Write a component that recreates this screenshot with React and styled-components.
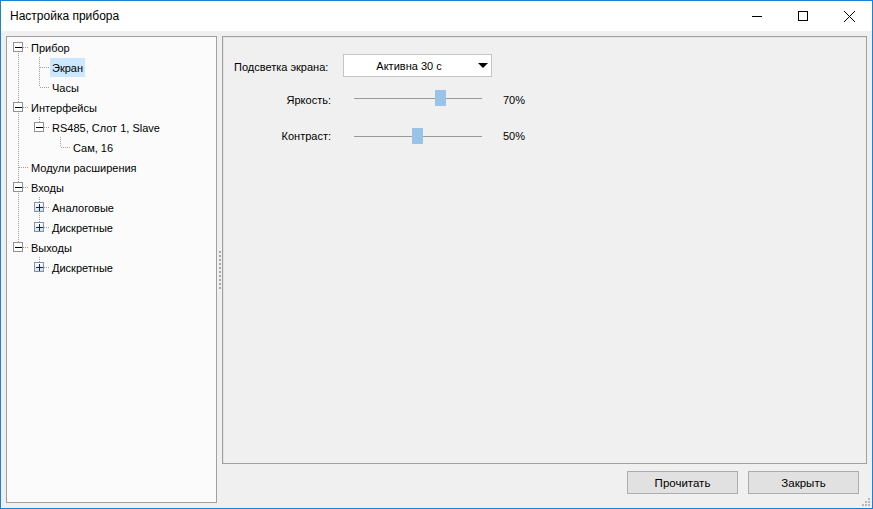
import React from "react";
import styled, { createGlobalStyle } from "styled-components";

const Global = createGlobalStyle`
  html, body { margin: 0; padding: 0; background: #fff; }
  body { font-family: "Liberation Sans", Arial, sans-serif; }
  * { box-sizing: border-box; }
`;

const Window = styled.div`
  position: relative;
  width: 873px;
  height: 509px;
  border: 1px solid #1883d7;
  background: #f0f0f0;
  display: flex;
  flex-direction: column;
  font-family: "Liberation Sans", Arial, sans-serif;
  font-size: 11px;
  color: #000;
`;

const TitleBar = styled.div`
  height: 30px;
  background: #fff;
  display: flex;
  align-items: center;
`;

const Title = styled.div`
  flex: 1;
  padding-left: 9px;
  font-size: 12px;
  color: #000;
`;

const CaptionButton = styled.div`
  width: 46px;
  height: 30px;
  display: flex;
  align-items: center;
  justify-content: center;
`;

const Body = styled.div`
  flex: 1;
  display: flex;
  padding: 5px;
  min-height: 0;
`;

const TreePanel = styled.div`
  width: 211px;
  border: 1px solid #a0a0a0;
  background: #fbfbfb;
  display: flex;
  flex-direction: column;
`;

const TreeRow = styled.div`
  height: 20px;
  display: flex;
  align-items: center;
  white-space: nowrap;
`;

const TreeLabel = styled.span`
  margin-left: 1px;
  padding: 0 2px;
  height: 19px;
  line-height: 20px;
  background: ${(p) => (p.$selected ? "#cce8ff" : "transparent")};
`;

const Splitter = styled.div`
  width: 5px;
  display: flex;
  flex-direction: column;
  align-items: center;
  justify-content: center;
  gap: 2px;
  padding-top: 1px;
`;

const SplitterDot = styled.div`
  width: 2px;
  height: 2px;
  background: #a7a7a7;
`;

const RightColumn = styled.div`
  flex: 1;
  display: flex;
  flex-direction: column;
`;

const SettingsPanel = styled.div`
  height: 428px;
  border: 1px solid #a0a0a0;
  box-shadow: inset 1px 1px 0 #e3e3e3;
  padding: 17px 0 0 11px;
  display: flex;
  flex-direction: column;
`;

const FormRow = styled.div`
  display: flex;
  align-items: center;
  height: ${(p) => p.$h}px;
  margin-top: ${(p) => p.$mt || 0}px;
`;

const FieldLabel = styled.div`
  width: 97px;
  margin-right: 12px;
  text-align: ${(p) => (p.$right ? "right" : "left")};
  transform: translateY(${(p) => p.$dy || 0}px);
  white-space: nowrap;
`;

const Combo = styled.div`
  position: relative;
  width: 149px;
  height: 23px;
  background: #fff;
  border: 1px solid #c5c5c5;
  display: flex;
  align-items: center;
  padding-right: 17px;
`;

const ComboText = styled.div`
  flex: 1;
  text-align: center;
`;

const ComboArrow = styled.svg`
  position: absolute;
  right: 3px;
  top: 8px;
`;

const Slider = styled.div`
  position: relative;
  width: 149px;
  height: 24px;
  display: flex;
  align-items: center;
  padding: 0 10px 0 11px;
`;

const Track = styled.div`
  flex: 1;
  height: 1px;
  background: #9a9a9a;
`;

const Thumb = styled.div`
  position: absolute;
  top: 4px;
  width: 11px;
  height: 16px;
  background: #9bc2e7;
`;

const ValueText = styled.div`
  margin-left: 11px;
  transform: translateY(${(p) => p.$dy || 0}px);
`;

const ButtonBar = styled.div`
  flex: 1;
  display: flex;
  justify-content: flex-end;
  align-items: flex-start;
  gap: 10px;
  padding: 7px 8px 0 0;
`;

const Button = styled.div`
  width: 111px;
  height: 23px;
  border: 1px solid #adadad;
  background: #e1e1e1;
  display: flex;
  align-items: center;
  justify-content: center;
  font-size: 11.5px;
`;

const Grip = styled.svg`
  position: absolute;
  right: 1px;
  bottom: 1px;
`;

const tree = [
  {
    label: "Прибор",
    open: true,
    children: [{ label: "Экран", selected: true }, { label: "Часы" }],
  },
  {
    label: "Интерфейсы",
    open: true,
    children: [
      {
        label: "RS485, Слот 1, Slave",
        open: true,
        children: [{ label: "Сам, 16" }],
      },
    ],
  },
  { label: "Модули расширения" },
  {
    label: "Входы",
    open: true,
    children: [
      { label: "Аналоговые", collapsed: true },
      { label: "Дискретные", collapsed: true },
    ],
  },
  {
    label: "Выходы",
    open: true,
    children: [{ label: "Дискретные", collapsed: true }],
  },
];

function flatten(nodes, depth, guides, out) {
  nodes.forEach((n, i) => {
    const hasNext = i < nodes.length - 1;
    const first = depth === 0 && i === 0;
    out.push({
      label: n.label,
      selected: n.selected,
      depth,
      guides,
      hasNext,
      first,
      box: n.collapsed ? "plus" : n.children ? "minus" : null,
    });
    if (n.children && n.open) flatten(n.children, depth + 1, [...guides, hasNext], out);
  });
  return out;
}

const rows = flatten(tree, 0, [], []);

const LINE = "#a0a0a0";

function GuideCell({ full }) {
  return (
    <svg width="21" height="20" style={{ display: "block", flex: "none" }}>
      {full && (
        <line x1="11.5" y1="0" x2="11.5" y2="20" stroke={LINE} strokeDasharray="1 1" />
      )}
    </svg>
  );
}

function NodeCell({ hasNext, first, box }) {
  const top = first ? 10 : 0;
  const bottom = hasNext ? 20 : 10;
  return (
    <svg width="21" height="20" style={{ display: "block", flex: "none" }}>
      <line x1="11.5" y1={top} x2="11.5" y2={bottom} stroke={LINE} strokeDasharray="1 1" />
      <line x1="12" y1="10.5" x2="22" y2="10.5" stroke={LINE} strokeDasharray="1 1" />
      {box === "minus" && (
        <g>
          <rect x="6.5" y="5.5" width="9" height="9" fill="#fff" stroke="#919191" />
          <line x1="8" y1="10.5" x2="15" y2="10.5" stroke="#000" />
        </g>
      )}
      {box === "plus" && (
        <g>
          <defs>
            <linearGradient id="pg" x1="0" y1="0" x2="0" y2="1">
              <stop offset="0" stopColor="#ffffff" />
              <stop offset="1" stopColor="#d3dce6" />
            </linearGradient>
          </defs>
          <rect x="6.5" y="5.5" width="9" height="9" fill="url(#pg)" stroke="#8094ab" />
          <line x1="8" y1="10.5" x2="15" y2="10.5" stroke="#1a2a3a" />
          <line x1="11.5" y1="7" x2="11.5" y2="14" stroke="#1a2a3a" />
        </g>
      )}
    </svg>
  );
}

function SliderControl({ value }) {
  const left = 16 + (value / 100) * 117 - 5.5;
  return (
    <Slider>
      <Track />
      <Thumb style={{ left: `${left}px` }} />
    </Slider>
  );
}

export default function App() {
  return (
    <>
      <Global />
      <Window>
        <TitleBar>
          <Title>Настройка прибора</Title>
          <CaptionButton>
            <svg width="10" height="10">
              <line x1="0" y1="5.5" x2="10" y2="5.5" stroke="#000" />
            </svg>
          </CaptionButton>
          <CaptionButton>
            <svg width="10" height="10">
              <rect x="0.5" y="0.5" width="9" height="9" fill="none" stroke="#000" />
            </svg>
          </CaptionButton>
          <CaptionButton>
            <svg width="11" height="11">
              <line x1="0" y1="0" x2="11" y2="11" stroke="#000" />
              <line x1="11" y1="0" x2="0" y2="11" stroke="#000" />
            </svg>
          </CaptionButton>
        </TitleBar>
        <Body>
          <TreePanel>
            {rows.map((r, i) => (
              <TreeRow key={i}>
                {r.guides.map((g, j) => (
                  <GuideCell key={j} full={g} />
                ))}
                <NodeCell hasNext={r.hasNext} first={r.first} box={r.box} />
                <TreeLabel $selected={r.selected}>{r.label}</TreeLabel>
              </TreeRow>
            ))}
          </TreePanel>
          <Splitter>
            {Array.from({ length: 10 }).map((_, i) => (
              <SplitterDot key={i} />
            ))}
          </Splitter>
          <RightColumn>
            <SettingsPanel>
              <FormRow $h={23}>
                <FieldLabel $dy={1}>Подсветка экрана:</FieldLabel>
                <Combo>
                  <ComboText>Активна 30 с</ComboText>
                  <ComboArrow width="10" height="6">
                    <polygon points="0,0 10,0 5,5" fill="#000" />
                  </ComboArrow>
                </Combo>
              </FormRow>
              <FormRow $h={24} $mt={9}>
                <FieldLabel $right $dy={2}>Яркость:</FieldLabel>
                <SliderControl value={70} />
                <ValueText $dy={2}>70%</ValueText>
              </FormRow>
              <FormRow $h={24} $mt={14}>
                <FieldLabel $right $dy={0}>Контраст:</FieldLabel>
                <SliderControl value={50} />
                <ValueText $dy={0}>50%</ValueText>
              </FormRow>
            </SettingsPanel>
            <ButtonBar>
              <Button>Прочитать</Button>
              <Button>Закрыть</Button>
            </ButtonBar>
          </RightColumn>
        </Body>
        <Grip width="10" height="10">
          <rect x="7" y="1" width="2" height="2" fill="#b8b8b8" />
          <rect x="4" y="4" width="2" height="2" fill="#b8b8b8" />
          <rect x="7" y="4" width="2" height="2" fill="#b8b8b8" />
          <rect x="1" y="7" width="2" height="2" fill="#b8b8b8" />
          <rect x="4" y="7" width="2" height="2" fill="#b8b8b8" />
          <rect x="7" y="7" width="2" height="2" fill="#b8b8b8" />
        </Grip>
      </Window>
    </>
  );
}
